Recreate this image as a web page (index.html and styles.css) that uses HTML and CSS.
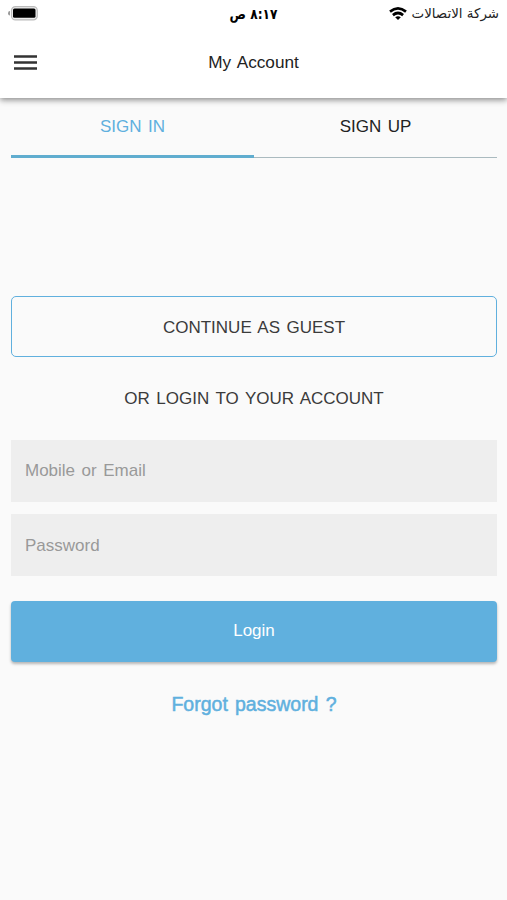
FILE: index.html
```html
<!DOCTYPE html>
<html lang="en">
<head>
<meta charset="utf-8">
<title>My Account</title>
<link rel="stylesheet" href="styles.css">
</head>
<body>
<header class="header">
  <div class="status">
    <svg class="battery" width="30" height="15" viewBox="0 0 30 15"><rect x="3.500" y=".6" width="25.800" height="13.300" rx="4" fill="#eee" stroke="#bbb" stroke-width="1.200"/><rect x="5" y="2.500" width="22.500" height="9.300" rx="1.500"/><path d="M2 5Q0 5 0 7.200t2 2.200z" fill="#999"/></svg>
    <span class="time" dir="rtl">٨:١٧ ص</span>
    <span class="carrier"><svg width="18" height="13" viewBox="0 0 18 13"><g fill="none" stroke="#000" stroke-width="2.700"><path d="M1 4.600Q9-1.800 17 4.600M3.900 8.100q5.100-4.200 10.200 0"/></g><path d="M6.200 10.300q2.800-2.200 5.600 0L9 13z"/></svg><span class="operator" dir="rtl">شركة الاتصالات</span></span>
  </div>
  <div class="bar">
    <svg class="menu" width="23" height="16" viewBox="0 0 23 16"><path d="M0 1.500h23M0 7.500h23M0 13.500h23" stroke="#333" stroke-width="2.300"/></svg>
    <h1 class="title">My Account</h1>
  </div>
</header>
<main class="content">
  <nav class="tabs"><a class="tab active">SIGN IN</a><a class="tab">SIGN UP</a></nav>
  <button class="guest">CONTINUE AS GUEST</button>
  <p class="or">OR LOGIN TO YOUR ACCOUNT</p>
  <form class="form">
    <div class="field">Mobile or Email</div>
    <div class="field password">Password</div>
    <button class="login" type="button">Login</button>
  </form>
  <a class="forgot">Forgot password ?</a>
</main>
</body>
</html>
```
FILE: styles.css
```css
* { box-sizing: border-box; }
body { margin: 0; height: 900px; background: #fafafa; color: #222; font: 17px/20px "Liberation Sans", Arial, sans-serif; word-spacing: 1.8px; overflow: hidden; }
.header { height: 98px; background: #fff; box-shadow: 0 2px 6px rgba(0,0,0,.45); }
.status { height: 27px; display: grid; grid-template-columns: 1fr auto 1fr; align-items: center; padding: 0 8px; color: #000; word-spacing: 0; }
.battery { display: block; }
.time { font: bold 14px/20px "DejaVu Sans", sans-serif; transform: scaleX(.87); }
.carrier { display: flex; justify-content: flex-end; align-items: center; gap: 5px; }
.operator { font: 13.4px/20px "DejaVu Sans", sans-serif; color: #222; }
.bar { height: 71px; display: grid; grid-template-columns: 40px 1fr 40px; align-items: center; padding: 0 14px; }
.title { margin: 0; padding-bottom: 2px; font-size: 17.2px; font-weight: 400; text-align: center; }
.content { padding: 0 10px 0 11px; text-align: center; }
.tabs { display: flex; height: 60px; border-bottom: 1px solid #aababf; color: #222; }
.tab { flex: 1; height: 60px; padding-top: 19px; }
.active { color: #60b0de; border-bottom: 3px solid #60adcf; }
.guest { display: block; width: 100%; height: 61px; margin-top: 138px; padding: 2px 0 0; border: 1px solid #60b0de; border-radius: 5px; background: transparent; color: #3b3b3b; font: inherit; word-spacing: inherit; }
.or { margin: 32px 0 31px; color: #3b3b3b; }
.field { height: 62px; margin-bottom: 12px; padding: 21px 14px; background: #eee; color: #999; text-align: left; }
.password { padding-top: 22px; }
.login { display: block; width: 100%; height: 61px; margin-top: 25px; padding: 0 0 2px; border: 0; border-radius: 4px; background: #60b0de; color: #fff; font: inherit; box-shadow: 0 2px 3px rgba(0,0,0,.28); }
.forgot { display: block; margin-top: 32px; color: #60b0de; font-size: 19.5px; -webkit-text-stroke: .5px; }
```
